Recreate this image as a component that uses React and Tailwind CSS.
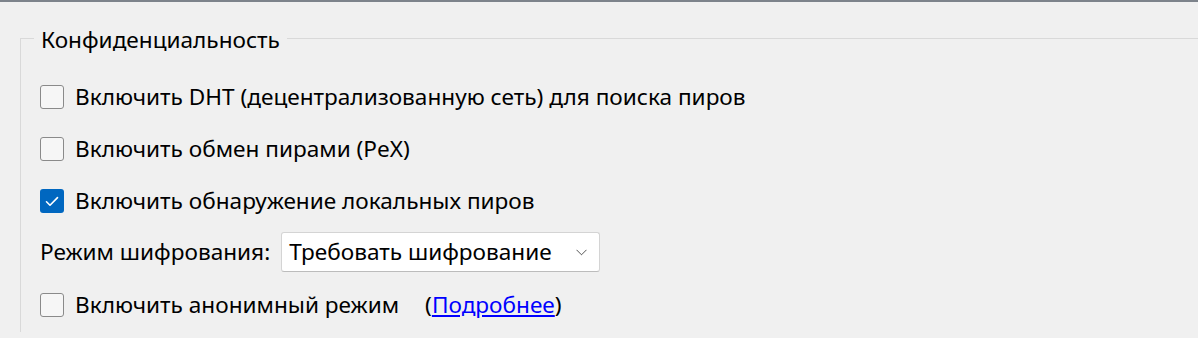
function Check({ checked }) {
  return checked ? (
    <span className="flex h-6 w-6 shrink-0 items-center justify-center rounded-[3px] bg-[#0067c0]">
      <svg width="14" height="11" viewBox="0 0 14 11" fill="none">
        <path d="M1.5 5.8 L5 9.2 L12.5 1.6" stroke="#fff" strokeWidth="1.6" strokeLinecap="round" strokeLinejoin="round" />
      </svg>
    </span>
  ) : (
    <span className="h-6 w-6 shrink-0 rounded-[3px] border border-[#8a8a8a] bg-[#f6f6f6]" />
  )
}

function Row({ checked, children }) {
  return (
    <div className="flex h-[52px] items-center gap-[11px]">
      <Check checked={checked} />
      <span>{children}</span>
    </div>
  )
}

export default function App() {
  return (
    <div className="h-[338px] w-[1198px] overflow-hidden bg-[#f0f0f0] text-[22.6px] text-black"
      style={{ fontFamily: '"Segoe UI", "Noto Sans", sans-serif' }}>
      <div className="h-[2px] bg-[#7d838b]" />
      <div className="relative ml-5 mt-[36px] border-l border-t border-[#d9d9d9] pl-[19px] pt-[32px]">
        {/* Group title sits over the frame line */}
        <div className="absolute -top-[13px] left-[13px] bg-[#f0f0f0] px-[7px] leading-[28px]">Конфиденциальность</div>
        <Row>Включить DHT (децентрализованную сеть) для поиска пиров</Row>
        <Row>Включить обмен пирами (PeX)</Row>
        <Row checked>Включить обнаружение локальных пиров</Row>
        <div className="flex h-[50px] items-center">
          <span className="mr-[11px]">Режим шифрования:</span>
          <div className="flex h-10 w-[319px] items-center justify-between rounded-[3px] border border-[#d4d4d4] border-b-[#bcbcbc] bg-white pl-[7px] pr-[12px]">
            <span>Требовать шифрование</span>
            <svg width="11" height="7" viewBox="0 0 11 7" fill="none">
              <path d="M0.5 0.8 L5.5 5.8 L10.5 0.8" stroke="#555" strokeWidth="1" />
            </svg>
          </div>
        </div>
        <div className="flex h-[55px] items-center gap-[11px]">
          <Check />
          <span>Включить анонимный режим</span>
          <span className="ml-[15px]">(<a href="#" className="text-[#0000ff] underline">Подробнее</a>)</span>
        </div>
      </div>
    </div>
  )
}
